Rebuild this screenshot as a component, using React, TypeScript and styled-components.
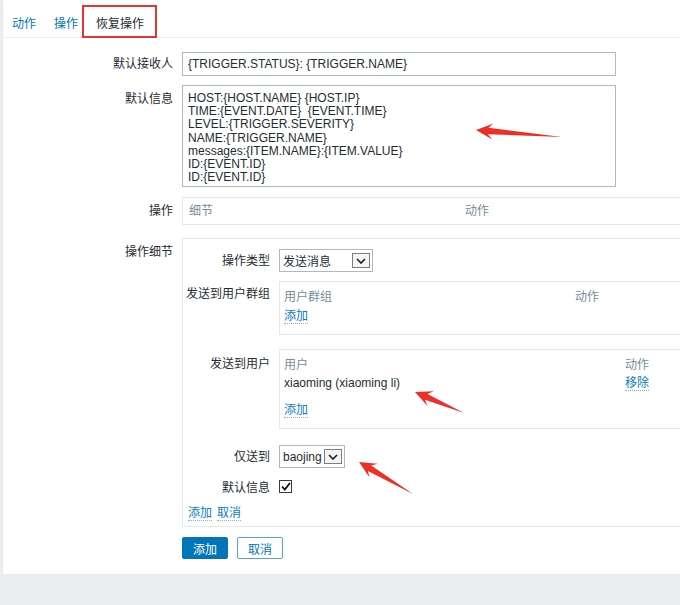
import React from "react";
import styled, { createGlobalStyle, css } from "styled-components";

const GlobalStyle = createGlobalStyle`
  html, body {
    margin: 0;
    padding: 0;
  }
  body {
    background: #ebeef0;
    overflow: hidden;
    font-family: "Liberation Sans", "Noto Sans CJK SC", sans-serif;
    font-size: 12px;
    color: #1f2c33;
  }
`;

const Page = styled.div`
  position: relative;
  width: 680px;
  height: 605px;
  overflow: hidden;
`;

const Panel = styled.div`
  margin-left: 2px;
  width: 760px;
  background: #fff;
  border-left: 1px solid #e3e7ea;
  padding-bottom: 15px;
`;

const TabBar = styled.div`
  display: flex;
  height: 25px;
  padding-top: 12px;
  border-bottom: 1px solid #ebeef0;
`;

const Tab = styled.div<{ $active?: boolean; $marked?: boolean }>`
  position: relative;
  padding: 0 9px;
  line-height: 25px;
  color: ${({ $active }) => ($active ? "#1f2c33" : "#0275b8")};
  cursor: pointer;

  ${({ $marked }) =>
    $marked &&
    css`
      &::after {
        content: "";
        position: absolute;
        top: -7px;
        left: -5px;
        right: -4px;
        bottom: -1px;
        border: 2px solid #e8352b;
      }
    `}
`;

const Form = styled.div`
  padding-top: 14px;
`;

const FormRow = styled.div<{ $mb?: number }>`
  display: grid;
  grid-template-columns: 170px 1fr;
  column-gap: 9px;
  align-items: start;
  justify-items: start;
  margin-bottom: ${({ $mb }) => $mb ?? 10}px;
`;

const Label = styled.div<{ $pt?: number }>`
  justify-self: end;
  text-align: right;
  line-height: 14px;
  padding-top: ${({ $pt }) => $pt ?? 5}px;
  white-space: nowrap;
`;

const TextInput = styled.input`
  box-sizing: border-box;
  width: 434px;
  height: 24px;
  margin: 0;
  border: 1px solid #acbbc2;
  padding: 0 5px;
  font: inherit;
  color: inherit;
  outline: none;
`;

const TextArea = styled.textarea`
  box-sizing: border-box;
  display: block;
  width: 434px;
  height: 102px;
  margin: 0;
  border: 1px solid #acbbc2;
  padding: 6px 5px 4px;
  font: inherit;
  line-height: 13.2px;
  color: inherit;
  resize: none;
  overflow: hidden;
  outline: none;
`;

const Box = styled.div<{ $pad?: string }>`
  box-sizing: border-box;
  width: 560px;
  border: 1px solid #e4e8eb;
  padding: ${({ $pad }) => $pad ?? "0"};
`;

const BoxHeader = styled.div`
  display: grid;
  grid-template-columns: 276px 1fr;
  padding: 1px 6px 0;
  line-height: 25px;
  color: #768d99;
`;

const InnerRow = styled.div<{ $mb?: number }>`
  display: grid;
  grid-template-columns: 82px 1fr;
  column-gap: 9px;
  align-items: start;
  justify-items: start;
  margin-bottom: ${({ $mb }) => $mb ?? 10}px;
`;

const SubTable = styled.div`
  box-sizing: border-box;
  width: 480px;
  border: 1px solid #e4e8eb;
  padding: 4px 4px 8px;
`;

const TableRow = styled.div<{ $col: number; $head?: boolean; $mt?: number }>`
  display: grid;
  grid-template-columns: ${({ $col }) => $col}px 1fr;
  align-items: center;
  justify-items: start;
  height: ${({ $head }) => ($head ? 18 : 20)}px;
  margin-top: ${({ $mt }) => $mt ?? 0}px;
  color: ${({ $head }) => ($head ? "#768d99" : "#1f2c33")};
`;

const Link = styled.a`
  color: #0a7cc1;
  text-decoration: none;
  border-bottom: 1px dotted #7fb5d9;
  cursor: pointer;
  line-height: 14px;
`;

const LinkRow = styled.div`
  display: flex;
  align-items: center;
  gap: 5px;
  height: 16px;
`;

const Select = styled.div<{ $w?: number }>`
  box-sizing: border-box;
  display: inline-flex;
  align-items: center;
  justify-content: space-between;
  gap: 2px;
  height: 23px;
  width: ${({ $w }) => ($w ? `${$w}px` : "auto")};
  border: 1px solid #acbbc2;
  padding: 0 2px 0 3px;
  background: #fff;
`;

const SelectArrow = styled.span`
  box-sizing: border-box;
  display: inline-flex;
  align-items: center;
  justify-content: center;
  width: 18px;
  height: 15px;
  border: 1px solid #7d7d7d;
  background: #f4f4f4;
`;

const CheckBox = styled.span`
  box-sizing: border-box;
  display: inline-flex;
  align-items: center;
  justify-content: center;
  width: 13px;
  height: 13px;
  margin-top: 1px;
  border: 1px solid #3a3a3a;
  background: #fff;
`;

const ButtonRow = styled.div`
  display: flex;
  gap: 9px;
`;

const Button = styled.button<{ $primary?: boolean }>`
  height: 22px;
  padding: 0 10px;
  margin: 0;
  font: inherit;
  border-radius: 2px;
  border: 1px solid ${({ $primary }) => ($primary ? "#0275b8" : "#5a9fd0")};
  background: ${({ $primary }) => ($primary ? "#0275b8" : "#fff")};
  color: ${({ $primary }) => ($primary ? "#fff" : "#0275b8")};
  cursor: pointer;
`;

const Overlay = styled.svg`
  position: absolute;
  top: 0;
  left: 0;
  pointer-events: none;
`;

const Chevron = () => (
  <svg width="10" height="6" viewBox="0 0 10 6">
    <path d="M1 1 L5 5 L9 1" fill="none" stroke="#1a1a1a" strokeWidth="1.6" />
  </svg>
);

const DropDown: React.FC<{ value: string; width?: number }> = ({ value, width }) => (
  <Select $w={width}>
    <span>{value}</span>
    <SelectArrow>
      <Chevron />
    </SelectArrow>
  </Select>
);

// red annotation arrow, tip -> tail, tapering tail
const arrowPoints = (tip: [number, number], tail: [number, number]) => {
  const dx = tail[0] - tip[0];
  const dy = tail[1] - tip[1];
  const len = Math.hypot(dx, dy);
  const ux = dx / len;
  const uy = dy / len;
  const px = -uy;
  const py = ux;
  const head = 17;
  const half = 8;
  const neck = 3.2;
  const at = (d: number, s: number) =>
    `${(tip[0] + ux * d + px * s).toFixed(1)},${(tip[1] + uy * d + py * s).toFixed(1)}`;
  return [
    at(0, 0),
    at(head, half),
    at(head * 0.72, neck),
    `${tail[0]},${tail[1]}`,
    at(head * 0.72, -neck),
    at(head, -half),
  ].join(" ");
};

const arrows: [number, number][][] = [
  [[476, 130], [562, 137]],
  [[415, 392], [464, 413]],
  [[359, 462], [413, 494]],
];

const message = [
  "HOST:{HOST.NAME} {HOST.IP}",
  "TIME:{EVENT.DATE}  {EVENT.TIME}",
  "LEVEL:{TRIGGER.SEVERITY}",
  "NAME:{TRIGGER.NAME}",
  "messages:{ITEM.NAME}:{ITEM.VALUE}",
  "ID:{EVENT.ID}",
  "ID:{EVENT.ID}",
].join("\n");

export default function App() {
  return (
    <Page>
      <GlobalStyle />
      <Panel>
        <TabBar>
          <Tab>动作</Tab>
          <Tab>操作</Tab>
          <Tab $active $marked>
            恢复操作
          </Tab>
        </TabBar>

        <Form>
          <FormRow $mb={9}>
            <Label $pt={5}>默认接收人</Label>
            <TextInput readOnly value="{TRIGGER.STATUS}: {TRIGGER.NAME}" />
          </FormRow>

          <FormRow>
            <Label $pt={7}>默认信息</Label>
            <TextArea readOnly value={message} />
          </FormRow>

          <FormRow $mb={13}>
            <Label $pt={7}>操作</Label>
            <Box>
              <BoxHeader>
                <span>细节</span>
                <span>动作</span>
              </BoxHeader>
            </Box>
          </FormRow>

          <FormRow $mb={10}>
            <Label $pt={7}>操作细节</Label>
            <Box $pad="10px 0 5px 5px">
              <InnerRow $mb={9}>
                <Label $pt={5}>操作类型</Label>
                <DropDown value="发送消息" width={94} />
              </InnerRow>

              <InnerRow $mb={14}>
                <Label $pt={6}>发送到用户群组</Label>
                <SubTable>
                  <TableRow $col={291} $head>
                    <span>用户群组</span>
                    <span>动作</span>
                  </TableRow>
                  <TableRow $col={291} $mt={2}>
                    <Link>添加</Link>
                  </TableRow>
                </SubTable>
              </InnerRow>

              <InnerRow $mb={16}>
                <Label $pt={8}>发送到用户</Label>
                <SubTable>
                  <TableRow $col={341} $head>
                    <span>用户</span>
                    <span>动作</span>
                  </TableRow>
                  <TableRow $col={341} $mt={1}>
                    <span>xiaoming (xiaoming li)</span>
                    <Link>移除</Link>
                  </TableRow>
                  <TableRow $col={341} $mt={7}>
                    <Link>添加</Link>
                  </TableRow>
                </SubTable>
              </InnerRow>

              <InnerRow $mb={11}>
                <Label $pt={5}>仅送到</Label>
                <DropDown value="baojing" />
              </InnerRow>

              <InnerRow $mb={10}>
                <Label $pt={2}>默认信息</Label>
                <CheckBox>
                  <svg width="10" height="9" viewBox="0 0 10 9">
                    <path d="M1 4.5 L3.8 7.5 L9 1" fill="none" stroke="#111" strokeWidth="1.8" />
                  </svg>
                </CheckBox>
              </InnerRow>

              <LinkRow>
                <Link>添加</Link>
                <Link>取消</Link>
              </LinkRow>
            </Box>
          </FormRow>

          <FormRow $mb={0}>
            <span />
            <ButtonRow>
              <Button $primary>添加</Button>
              <Button>取消</Button>
            </ButtonRow>
          </FormRow>
        </Form>
      </Panel>

      <Overlay width="680" height="605" viewBox="0 0 680 605">
        {arrows.map(([tip, tail], i) => (
          <polygon key={i} points={arrowPoints(tip, tail)} fill="#ec3027" />
        ))}
      </Overlay>
    </Page>
  );
}
